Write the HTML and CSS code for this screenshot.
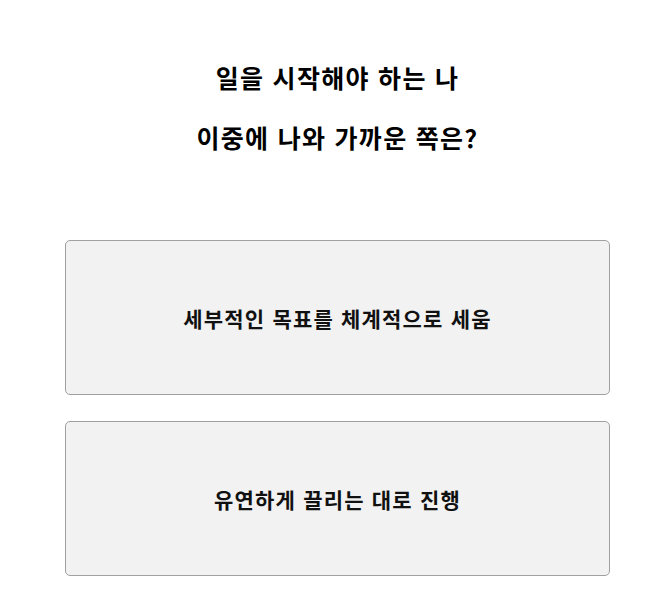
FILE: index.html
```html
<!DOCTYPE html>
<html lang="ko">
<head>
    <meta charset="UTF-8">
    <meta name="viewport" content="width=device-width, initial-scale=1.0">
    <title>질문</title>
    <link rel="stylesheet" href="styles.css">
</head>
<body>
    <div class="container">
        <h1 class="question">일을 시작해야 하는 나<br>이중에 나와 가까운 쪽은?</h1>
        <div class="answers">
            <button class="answer">세부적인 목표를 체계적으로 세움</button>
            <button class="answer">유연하게 끌리는 대로 진행</button>
        </div>
    </div>
</body>
</html>
```

FILE: styles.css
```css
/* 질문 페이지 */
body {
    margin: 0;
    background-color: #fff;
    font-family: "Noto Sans CJK KR", "Noto Sans", sans-serif;
    color: #000;
}
.container {
    width: 545px;
    margin-left: 65px;
    padding-top: 47px;
}
.question {
    margin: 0;
    text-align: center;
    font-size: 25px;
    font-weight: bold;
    line-height: 60px;
    letter-spacing: 1.3px;
}
.answers {
    margin-top: 73px;
    display: flex;
    flex-direction: column;
    gap: 26px;
}
.answer {
    height: 155px;
    width: 100%;
    background-color: #f2f2f2;
    border: 1px solid #a0a0a0;
    border-radius: 5px;
    font-family: inherit;
    font-size: 21px;
    font-weight: bold;
    letter-spacing: 1.2px;
    color: #111;
    cursor: pointer;
}
```
